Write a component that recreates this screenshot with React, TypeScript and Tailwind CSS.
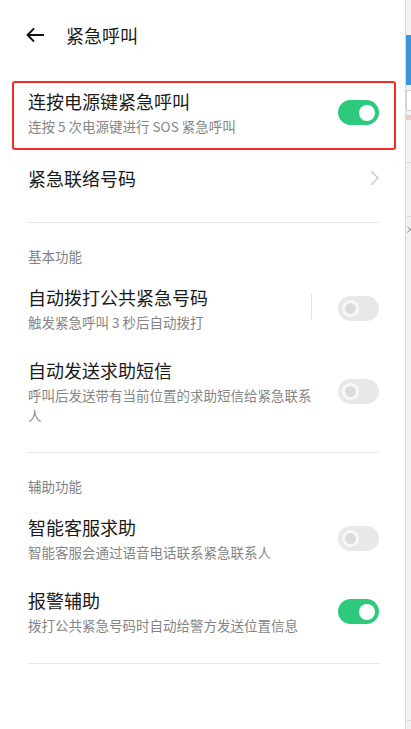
import React from "react";

const Toggle = ({ on }: { on: boolean }) =>
  on ? (
    <div className="w-[41px] h-[25px] rounded-full bg-[#2dc97d] flex items-center justify-end pr-[4px] shrink-0">
      <div className="w-[16px] h-[16px] rounded-full bg-white" />
    </div>
  ) : (
    <div className="w-[41px] h-[25px] rounded-full bg-[#e8e8e8] flex items-center pl-[4px] shrink-0">
      <div className="w-[17px] h-[17px] rounded-full bg-[#dcdcdc] border-[3px] border-[#f8f8f8]" />
    </div>
  );

const Texts = ({ title, sub }: { title: string; sub: string }) => (
  <div className="flex-1 min-w-0">
    <div className="text-[18px] leading-[24px] text-[#1a1a1a]">{title}</div>
    <div className="mt-[3px] text-[13.5px] leading-[20px] text-[#858585]">{sub}</div>
  </div>
);

const Divider = ({ cls }: { cls: string }) => (
  <div className={"ml-[28px] mr-[26px] h-px bg-[#e6e6e6] " + cls} />
);

const SectionHeader = ({ text }: { text: string }) => (
  <div className="mt-[23px] pl-[28px] text-[13.5px] leading-[20px] text-[#7f7f7f]">{text}</div>
);

export default function App() {
  return (
    <div className="w-[411px] h-[729px] flex bg-white overflow-hidden font-['Noto_Sans_CJK_SC','Noto_Sans',sans-serif]">
      <div className="w-[405px] h-full bg-white flex flex-col shrink-0">
        {/* header */}
        <div className="h-[70px] flex items-center pl-[26px]">
          <svg width="18" height="14" viewBox="0 0 18 14" fill="none">
            <path d="M17.5 7H1.5M7.5 1L1.5 7L7.5 13" stroke="#111" strokeWidth="1.8" strokeLinecap="round" strokeLinejoin="round" />
          </svg>
          <div className="ml-[22px] text-[18px] leading-[24px] text-[#1a1a1a]">紧急呼叫</div>
        </div>

        {/* highlighted row */}
        <div className="mt-[11px] ml-[12px] w-[384px] h-[69px] border-2 border-[#f52a22] rounded-[3px] flex items-center pl-[14px] pr-[15px] pt-[6px] pb-[12px]">
          <Texts title="连按电源键紧急呼叫" sub="连按 5 次电源键进行 SOS 紧急呼叫" />
          <Toggle on />
        </div>

        {/* contacts */}
        <div className="pl-[28px] pr-[26px] pt-[16px] pb-[32px] flex items-center justify-between">
          <div className="text-[18px] leading-[24px] text-[#1a1a1a]">紧急联络号码</div>
          <svg width="9" height="16" viewBox="0 0 9 16" fill="none">
            <path d="M1 1L8 8L1 15" stroke="#c4c4c4" strokeWidth="1.3" strokeLinejoin="round" />
          </svg>
        </div>
        <Divider cls="" />

        <SectionHeader text="基本功能" />
        <div className="mt-[19px] pl-[28px] pr-[26px] flex items-center">
          <Texts title="自动拨打公共紧急号码" sub="触发紧急呼叫 3 秒后自动拨打" />
          <div className="w-px h-[25px] bg-[#e2e2e2] -mt-[4px]" />
          <div className="ml-[26px]">
            <Toggle on={false} />
          </div>
        </div>
        <div className="mt-[26px] pl-[28px] pr-[26px] flex items-center">
          <Texts title="自动发送求助短信" sub="呼叫后发送带有当前位置的求助短信给紧急联系人" />
          <div className="ml-[20px]">
            <Toggle on={false} />
          </div>
        </div>
        <Divider cls="mt-[27px]" />

        <SectionHeader text="辅助功能" />
        <div className="mt-[19px] pl-[28px] pr-[26px] flex items-center">
          <Texts title="智能客服求助" sub="智能客服会通过语音电话联系紧急联系人" />
          <div className="ml-[20px]">
            <Toggle on={false} />
          </div>
        </div>
        <div className="mt-[26px] pl-[28px] pr-[26px] flex items-center">
          <Texts title="报警辅助" sub="拨打公共紧急号码时自动给警方发送位置信息" />
          <div className="ml-[20px]">
            <Toggle on />
          </div>
        </div>
        <Divider cls="mt-[28px]" />
      </div>

      {/* edge of neighbouring window */}
      <div className="w-px h-full bg-[#d8d8d8] shrink-0" />
      <div className="flex-1 h-full bg-[#f2f2f2] flex flex-col">
        <div className="h-[35px]" />
        <div className="h-[50px] bg-[#3d93dc]" />
        <div className="h-[5px]" />
        <div className="h-[21px] bg-white border-l border-t border-b border-[#cfcfcf]" />
        <div className="h-[4px]" />
        <div className="h-[5px] bg-[#f1c9c9]" />
        <div className="h-[42px]" />
        <div className="h-px bg-[#dcdcdc]" />
        <div className="h-[53px]" />
        <div className="h-px bg-[#dcdcdc]" />
        <div className="h-[9px]" />
        <svg width="6" height="7" viewBox="0 0 6 7" fill="none" className="ml-[1px]">
          <path d="M0.5 0.5L6 6.5M6 0.5L0.5 6.5" stroke="#8a8a8a" strokeWidth="1" />
        </svg>
        <div className="flex-1" />
        <div className="h-px bg-[#dcdcdc]" />
        <div className="h-[8px]" />
      </div>
    </div>
  );
}
